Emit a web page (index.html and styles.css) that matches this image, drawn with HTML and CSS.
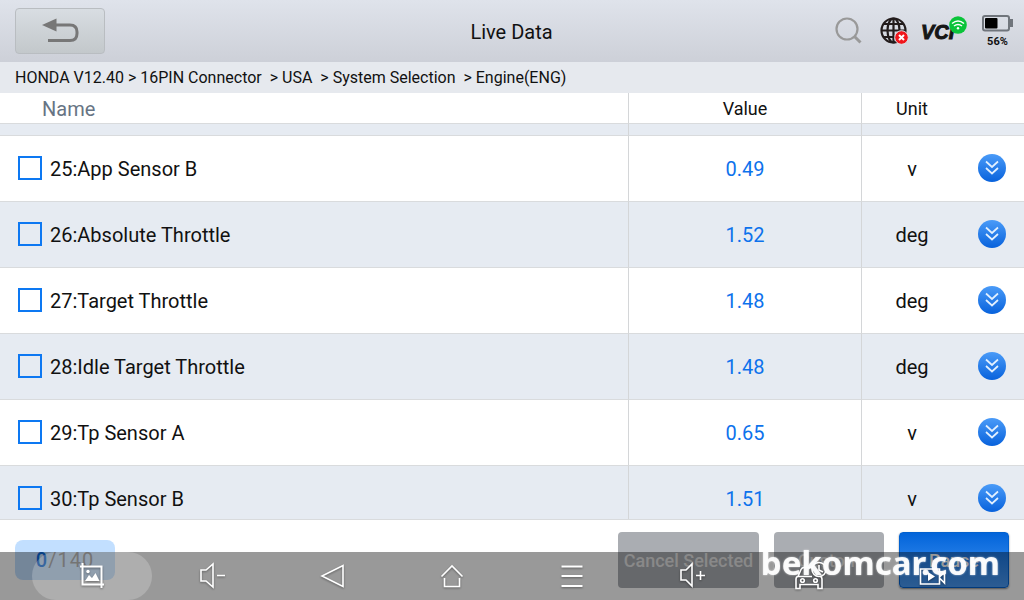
FILE: index.html
```html
<!DOCTYPE html>
<html lang="en">
<head>
<meta charset="utf-8">
<meta name="viewport" content="width=device-width, initial-scale=1">
<title>Live Data</title>
<link rel="stylesheet" href="styles.css">
</head>
<body>
<svg class="defs" aria-hidden="true">
  <defs>
    <linearGradient id="blue" x1="0" y1="0" x2="0" y2="1"><stop offset="0" stop-color="#4a9bf8"/><stop offset="1" stop-color="#0862dc"/></linearGradient>
    <symbol id="more" viewBox="0 0 28 28"><circle cx="14" cy="14" r="14" fill="url(#blue)"/><path d="M8 7.500l6 5.500 6-5.500M8 14l6 5.500 6-5.500" fill="none" stroke="#e2f0ff" stroke-width="1.700"/></symbol>
  </defs>
</svg>
<header class="topbar">
  <button class="back" type="button" aria-label="Back">
    <svg width="38" height="26" viewBox="0 0 38 26"><path d="M1 7L15.500 0.500V13.500Z" fill="#777"/><path d="M14 7H29q7 0 7 7v1.500q0 7-7 7H7" fill="none" stroke="#777" stroke-width="3"/></svg>
  </button>
  <h1 class="title">Live Data</h1>
  <div class="status">
    <svg class="search" width="28" height="28" viewBox="0 0 28 28" fill="none" stroke="#999"><circle cx="12" cy="12" r="10.500" stroke-width="2.200"/><path d="M19.500 19.500l6 6" stroke-width="3"/></svg>
    <svg class="globe" width="29" height="29" viewBox="0 0 29 29" fill="none"><g stroke="#231c1c" stroke-width="2.200"><circle cx="13.500" cy="13.500" r="12"/><ellipse cx="13.500" cy="13.500" rx="6" ry="12"/><path d="M1.500 13.500h24M13.500 1.500v24M3.500 7h20M3.500 20h20"/></g><circle cx="21.500" cy="20.500" r="6.800" fill="#f0161c" stroke="#dfe2e8"/><path d="M19 18l5 5M24 18l-5 5" stroke="#fff" stroke-width="2"/></svg>
    <div class="vci"><span class="vci-text">VCI</span>
      <svg class="wifi" width="18" height="18" viewBox="0 0 18 18" fill="none" stroke="#fff" stroke-width="1.500"><circle cx="9" cy="9" r="8.800" fill="#0ac43a" stroke="none"/><path d="M3 7.500q6-5 12 0M5 10q4-3.200 8 0"/><circle cx="9" cy="12.300" r="1.200" fill="#fff" stroke="none"/></svg>
    </div>
    <div class="battery">
      <svg width="31" height="17" viewBox="0 0 31 17"><rect x="1" y="1" width="26" height="14.500" rx="2" fill="none" stroke="#70757c" stroke-width="2"/><rect x="3" y="3" width="12.500" height="10.500" rx="1"/><path d="M28 4h3v8h-3z" fill="#70757c"/></svg>
      <span>56%</span>
    </div>
  </div>
</header>
<nav class="crumbs" aria-label="Breadcrumb">HONDA V12.40 &gt; 16PIN Connector&nbsp; &gt; USA&nbsp; &gt; System Selection&nbsp; &gt; Engine(ENG)</nav>
<main class="data">
  <table>
    <colgroup><col><col class="c-value"><col class="c-unit"><col class="c-more"></colgroup>
    <thead><tr><th class="name">Name</th><th>Value</th><th>Unit</th><th></th></tr></thead>
    <tbody>
      <tr class="peek"><td></td><td></td><td></td><td></td></tr>
      <tr><td><label><input type="checkbox">25:App Sensor B</label></td><td>0.49</td><td>v</td><td><button type="button" aria-label="More"><svg><use href="#more"/></svg></button></td></tr>
      <tr><td><label><input type="checkbox">26:Absolute Throttle</label></td><td>1.52</td><td>deg</td><td><button type="button" aria-label="More"><svg><use href="#more"/></svg></button></td></tr>
      <tr><td><label><input type="checkbox">27:Target Throttle</label></td><td>1.48</td><td>deg</td><td><button type="button" aria-label="More"><svg><use href="#more"/></svg></button></td></tr>
      <tr><td><label><input type="checkbox">28:Idle Target Throttle</label></td><td>1.48</td><td>deg</td><td><button type="button" aria-label="More"><svg><use href="#more"/></svg></button></td></tr>
      <tr><td><label><input type="checkbox">29:Tp Sensor A</label></td><td>0.65</td><td>v</td><td><button type="button" aria-label="More"><svg><use href="#more"/></svg></button></td></tr>
      <tr><td><label><input type="checkbox">30:Tp Sensor B</label></td><td>1.51</td><td>v</td><td><button type="button" aria-label="More"><svg><use href="#more"/></svg></button></td></tr>
    </tbody>
  </table>
</main>
<footer class="actions">
  <div class="count"><b>0</b>/140</div>
  <button class="btn wide" type="button">Cancel Selected</button>
  <button class="btn" type="button">Custom</button>
  <button class="btn primary" type="button">Pause</button>
</footer>
<nav class="system" aria-label="System">
  <button type="button" class="active" aria-label="Screenshot"><svg viewBox="0 0 32 32"><path d="M6.500 3v21.500H28M4 6.500h21.500V28" stroke-width="2"/><path d="M9 21l4-6 3 3 3.500-5 4 8z" fill="#fff" stroke="none"/><circle cx="12" cy="11.500" r="1.700" fill="#fff" stroke="none"/></svg></button>
  <button type="button" aria-label="Volume down"><svg viewBox="0 0 32 32"><path d="M5 10h5l7-6v23l-7-6H5zM21 15.500h8"/></svg></button>
  <button type="button" aria-label="Back"><svg viewBox="0 0 32 32"><path d="M27 5.500v21L6 16z"/></svg></button>
  <button type="button" aria-label="Home"><svg viewBox="0 0 32 32"><path d="M5.500 16.500L16 6l10.500 10.500M8.500 18v8.500h15V18"/></svg></button>
  <button type="button" aria-label="Menu"><svg viewBox="0 0 32 32"><path d="M5.500 6.500h21M5.500 16h21M5.500 26h21" stroke-width="2.200"/></svg></button>
  <button type="button" aria-label="Volume up"><svg viewBox="0 0 32 32"><path d="M5 10h5l6-6v22l-6-6H5zM20 15.500h9M24.500 11v9"/></svg></button>
  <button type="button" aria-label="Vehicle"><svg viewBox="0 0 32 32"><path d="M2 16.500l3-7q1-2 3-2h8M2 16.500q-2 0-2 3v9h4v-4h18v4h4v-9q0-3-2-3M2 16.500h14"/><circle cx="6.500" cy="20.500" r="1.800"/><circle cx="19.500" cy="20.500" r="1.800"/><circle cx="23" cy="9.500" r="7"/><path d="M23 5v5l4 2"/></svg></button>
  <button type="button" aria-label="Record"><svg viewBox="0 0 32 32"><path d="M4.500 9h19v15h-19zM23.500 17l5-5v11l-5-5"/><path d="M12 12l7 4.500-7 4.500z" fill="#fff" stroke="none"/></svg></button>
</nav>
<div class="watermark">bekomcar.com</div>
</body>
</html>
```
FILE: styles.css
```css
* { box-sizing: border-box; }
body {
  margin: 0;
  height: 100vh;
  display: flex;
  flex-direction: column;
  overflow: hidden;
  background: #fff;
  color: #111;
  font-family: Roboto, "Liberation Sans", sans-serif;
  font-size: 20px;
}
button { font: inherit; border: 0; padding: 0; background: none; }
svg { display: block; }
.defs { position: absolute; width: 0; height: 0; }

.topbar {
  flex: none;
  height: 62px;
  display: grid;
  grid-template-columns: 1fr auto 1fr;
  align-items: center;
  padding: 0 11px 0 10px;
  background: linear-gradient(#dfe3eb, #cdd0d8);
}
.back {
  width: 90px;
  height: 46px;
  margin-left: 5px;
  display: flex;
  align-items: center;
  justify-content: center;
  border: 1px solid #b9bdc1;
  border-radius: 4px;
  background: linear-gradient(#d8dde2, #c3c8cb);
}
.title { margin: 0; padding-top: 1px; font-size: 20px; font-weight: 400; }
.status { display: flex; align-items: center; justify-content: flex-end; }
.search { margin-right: 17px; }
.globe { margin-right: 12px; }
.vci { position: relative; width: 46px; margin-right: 15px; padding-top: 2px; }
.vci-text { font: italic 700 20px/24px "Liberation Sans", sans-serif; color: #161616; -webkit-text-stroke: 1px #161616; }
.wifi { position: absolute; top: -2px; right: 0; }
.battery { display: flex; flex-direction: column; align-items: center; padding-top: 2px; font-size: 11px; line-height: 15px; font-weight: 700; gap: 2px; }

.crumbs { flex: none; padding: 0 15px; font-size: 16px; line-height: 31px; background: #e6e9ee; }

.data { flex: 1; min-height: 0; overflow: hidden; }
table { width: 100%; table-layout: fixed; border-collapse: separate; border-spacing: 0; }
.c-value { width: 233px; }
.c-unit { width: 100px; }
.c-more { width: 62px; }
th, td { padding: 0; border-bottom: 1px solid #d9dbdd; text-align: center; font-weight: 400; }
th:first-child, td:first-child, th:nth-child(2), td:nth-child(2) { border-right: 1px solid #d4d6d8; }
th { height: 31px; font-size: 18px; }
th.name { padding: 2px 0 0 42px; text-align: left; font-size: 20px; color: #677484; }
td { height: 66px; }
.peek td { height: 12px; }
tbody tr:nth-child(odd) { background: #e6ebf2; }
td:first-child { text-align: left; }
td:nth-child(2) { color: #0d72ec; }
td button { display: block; margin: 0 0 2px 16px; }
td svg { width: 28px; height: 28px; }
label { display: flex; align-items: center; gap: 8px; padding-left: 18px; }
input { appearance: none; width: 24px; height: 24px; margin: 0 0 2px; border: 2px solid #0d78f2; }

.actions {
  flex: none;
  display: flex;
  gap: 15px;
  padding: 12px 15px;
  height: 81px;
  border-top: 1px solid #d9dbdd;
}
.count {
  width: 100px;
  height: 40px;
  margin: 8px auto 0 0;
  border-radius: 8px;
  background: #c2dfff;
  color: #888;
  line-height: 40px;
  text-align: center;
  letter-spacing: 1px;
}
.count b { color: #0a6be0; font-weight: 500; }
.btn {
  width: 110px;
  height: 56px;
  border-radius: 4px;
  background: #aaadb2;
  color: #e4e4e4;
  font-size: 18px;
  font-weight: 500;
}
.wide { width: 141px; }
.primary { background: linear-gradient(#0264da, #4a9af4); border: 1px solid #0261cf; box-shadow: 0 1px 2px #888; color: #fff; }

.system {
  position: fixed;
  inset: auto 0 0;
  display: flex;
  height: 48px;
  padding: 0 32px;
  background: rgba(0, 0, 0, .4);
}
.system button { flex: 1; display: flex; align-items: center; justify-content: center; }
.system .active { border-radius: 24px; background: rgba(255, 255, 255, .2); }
.system svg { width: 32px; height: 32px; fill: none; stroke: #fff; stroke-width: 1.6; overflow: visible; filter: drop-shadow(0 1px 1px rgba(0, 0, 0, .4)); }
.watermark {
  position: fixed;
  right: 24px;
  bottom: 17px;
  font: 700 33px/40px "Noto Sans", sans-serif;
  color: rgba(255, 255, 255, .92);
  text-shadow: 0 0 2px rgba(255, 255, 255, .7);
  pointer-events: none;
}
```
